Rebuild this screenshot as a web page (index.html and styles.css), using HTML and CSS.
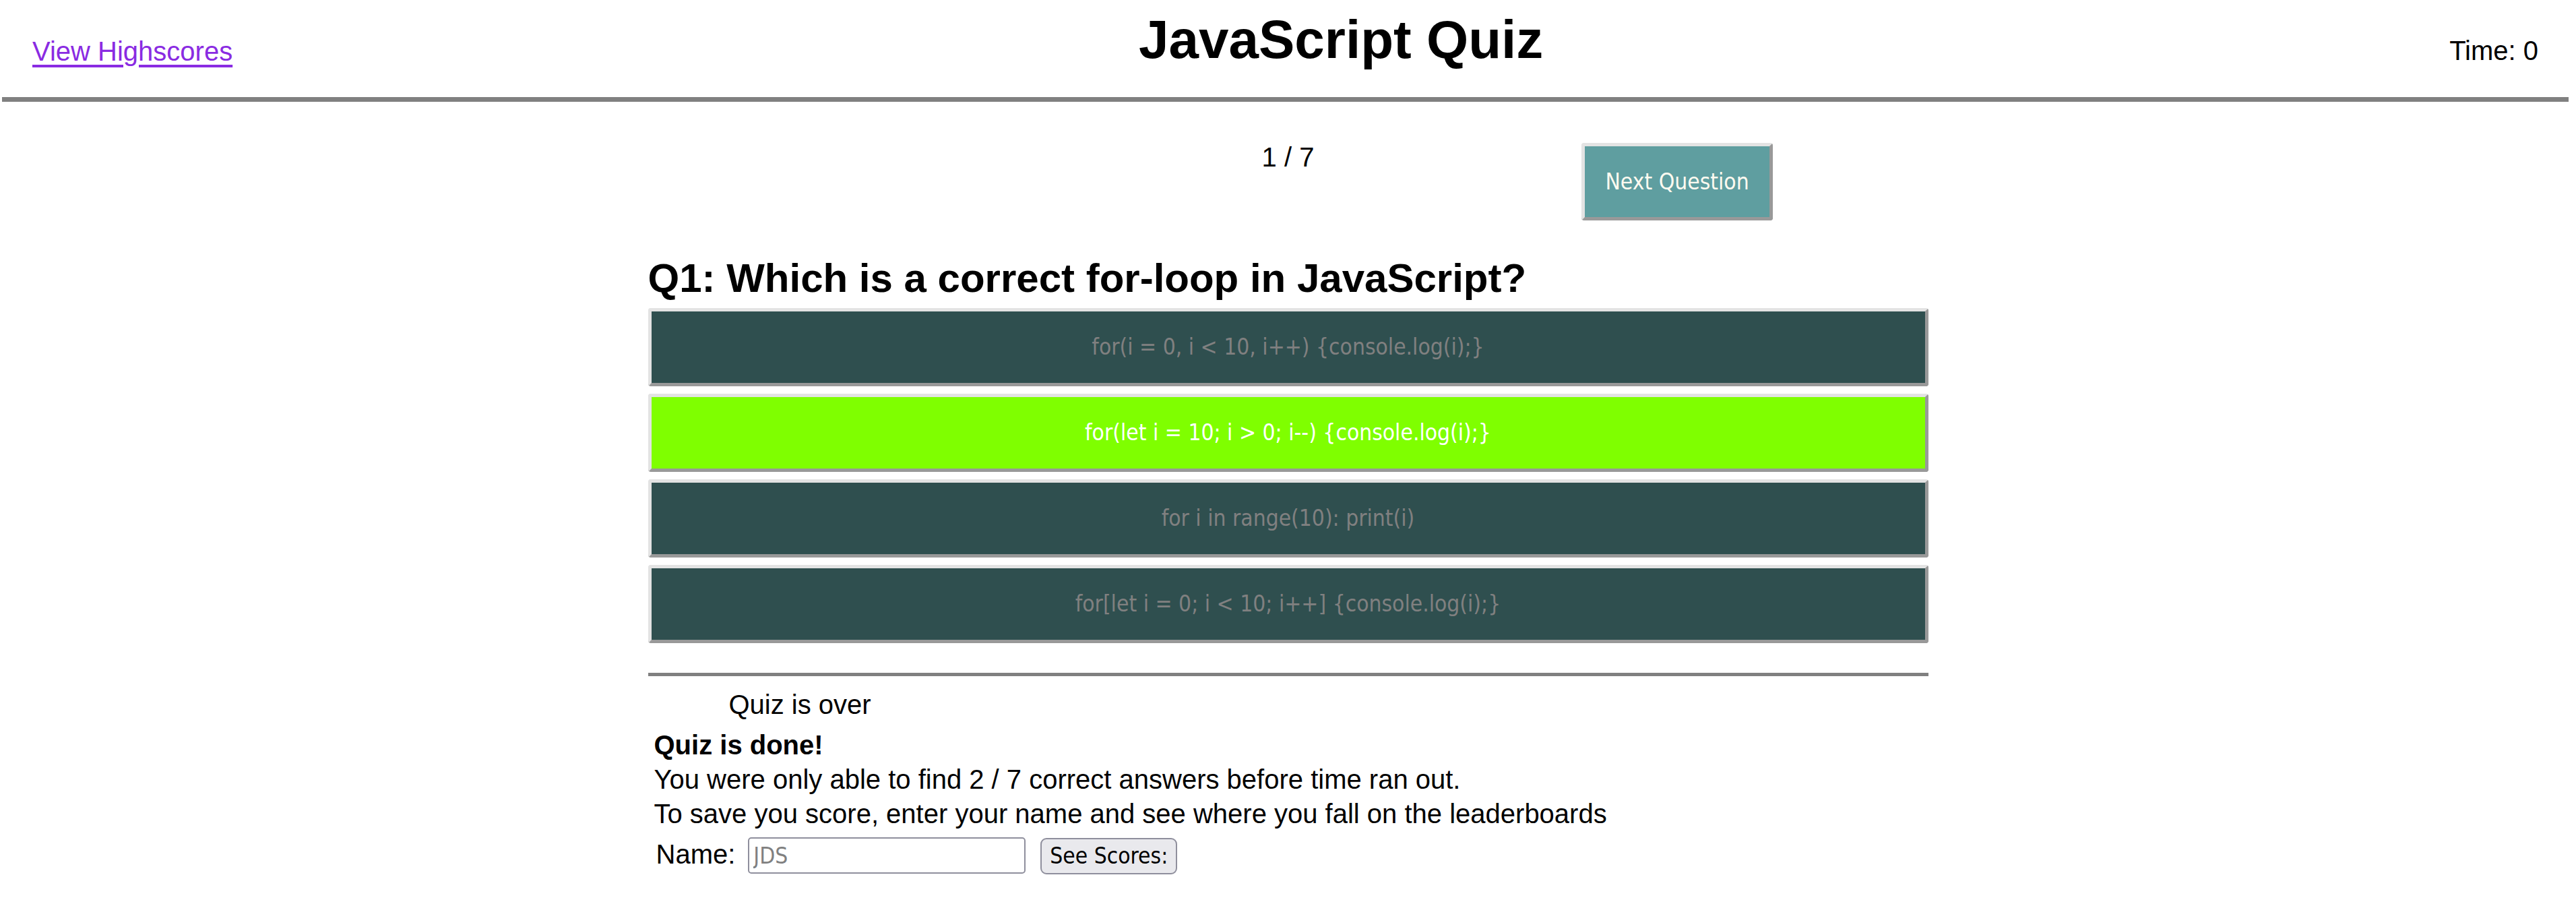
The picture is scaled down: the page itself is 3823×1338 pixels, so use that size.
FILE: index.html
```html
<!DOCTYPE html>
<html lang="en">
<head>
<meta charset="utf-8">
<title>JavaScript Quiz</title>
<link rel="stylesheet" href="styles.css">
</head>
<body>
<header class="topbar">
  <a class="highscores" href="#">View Highscores</a>
  <h1 class="title">JavaScript Quiz</h1>
  <div class="timer">Time: 0</div>
</header>
<main class="quiz">
  <div class="progress-row">
    <div class="spacer"></div>
    <div class="counter">1 / 7</div>
    <div class="next-cell"><button class="btn next" type="button">Next Question</button></div>
  </div>
  <h2 class="question">Q1: Which is a correct for-loop in JavaScript?</h2>
  <div class="answers">
    <button class="btn answer" type="button">for(i = 0, i &lt; 10, i++) {console.log(i);}</button>
    <button class="btn answer correct" type="button">for(let i = 10; i &gt; 0; i--) {console.log(i);}</button>
    <button class="btn answer" type="button">for i in range(10): print(i)</button>
    <button class="btn answer" type="button">for[let i = 0; i &lt; 10; i++] {console.log(i);}</button>
  </div>
  <section class="result">
    <p class="over">Quiz is over</p>
    <p class="done"><strong>Quiz is done!</strong><br>You were only able to find 2 / 7 correct answers before time ran out.<br>To save you score, enter your name and see where you fall on the leaderboards</p>
    <form class="save">
      <label class="name-label" for="name">Name:</label>
      <input class="name-input" id="name" type="text" placeholder="JDS">
      <button class="see-scores" type="button">See Scores:</button>
    </form>
  </section>
</main>
</body>
</html>
```
FILE: styles.css
```css
html, body {
  margin: 0;
  padding: 0;
  background: #ffffff;
}

body {
  font-family: "Liberation Sans", Arial, sans-serif;
  font-size: 40px;
  line-height: 46px;
  color: #000000;
}

.topbar {
  display: flex;
  justify-content: space-between;
  align-items: flex-start;
  margin: 0 11px 0 3px;
  padding: 13px 45px 39px;
  border-bottom: 7px solid #808080;
}

.highscores {
  margin-top: 40px;
  color: #8a2be2;
  text-decoration: underline;
  text-decoration-thickness: 4px;
  text-underline-offset: 6px;
}

.title {
  margin: 0;
  font-size: 80px;
  line-height: 92px;
  font-weight: bold;
}

.timer {
  margin-top: 39px;
}

.quiz {
  width: 1900px;
  margin: 0 auto;
}

.progress-row {
  display: grid;
  grid-template-columns: 1fr auto 1fr;
  align-items: start;
  margin-top: 59px;
}

.counter {
  line-height: 46px;
}

.next-cell {
  display: flex;
}

.btn {
  font-family: "DejaVu Sans Condensed", "DejaVu Sans", "Liberation Sans", sans-serif;
  font-stretch: condensed;
  font-size: 33.3px;
  line-height: 40px;
  padding: 33px;
  border-style: solid;
  border-width: 5px;
  border-color: #e3e3e3 #999999 #999999 #e3e3e3;
  border-radius: 4px;
  cursor: pointer;
}

.next {
  margin: 2px 0 0 397px;
  padding: 33px 30px;
  line-height: 39px;
  background: #5f9ea0;
  color: #fffaf0;
}

.question {
  margin: 51px 0 10px;
  font-size: 60px;
  line-height: 69px;
  font-weight: bold;
}

.answers {
  display: flex;
  flex-direction: column;
  gap: 11px;
}

.answer {
  width: 100%;
  text-align: center;
  background: #2f4f4f;
  color: #808080;
}

.answer.correct {
  background: #7fff00;
  color: #ffffff;
}

.result {
  margin-top: 44px;
  border-top: 5px solid #808080;
}

.over {
  margin: 19px 0 0;
  padding-left: 120px;
  line-height: 46px;
}

.done {
  margin: 12px 0 0;
  padding-left: 9px;
  line-height: 51px;
}

.save {
  display: flex;
  align-items: baseline;
  margin-top: 9px;
  padding-left: 12px;
}

.name-label {
  margin-right: 19px;
}

.name-input {
  box-sizing: border-box;
  width: 412px;
  height: 54px;
  padding: 2px 6px;
  border: 2px solid #8f8f9d;
  border-radius: 5px;
  font-family: "DejaVu Sans Condensed", "DejaVu Sans", "Liberation Sans", sans-serif;
  font-stretch: condensed;
  font-size: 33.3px;
  color: #000000;
  margin-right: 22px;
}

.name-input::placeholder {
  color: #808080;
}

.see-scores {
  box-sizing: border-box;
  height: 54px;
  padding: 0 12px;
  border: 2px solid #8f8f9d;
  border-radius: 9px;
  background: #e9e9ed;
  color: #000000;
  font-family: "DejaVu Sans Condensed", "DejaVu Sans", "Liberation Sans", sans-serif;
  font-stretch: condensed;
  font-size: 33.3px;
  line-height: 40px;
}
```
